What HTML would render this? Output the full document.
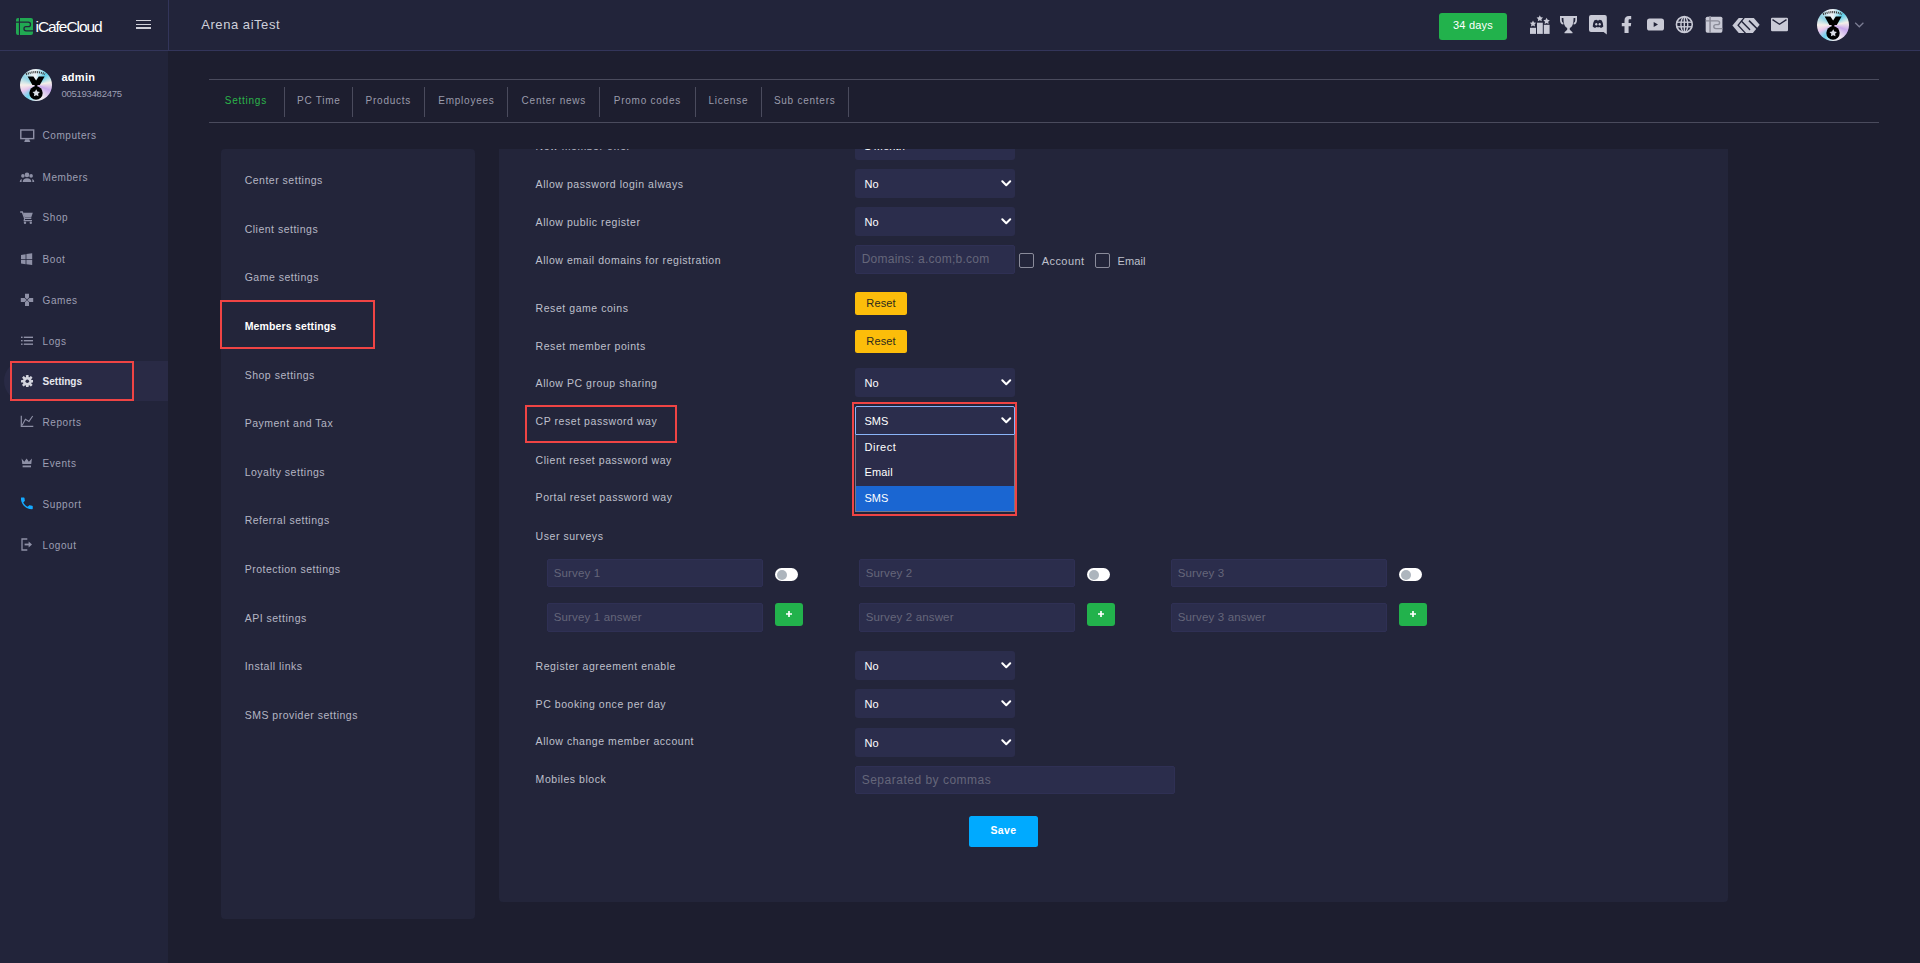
<!DOCTYPE html>
<html><head><meta charset="utf-8"><title>iCafeCloud</title>
<style>
html,body{margin:0;padding:0;}
body{width:1920px;height:963px;overflow:hidden;background:#1d1e2f;position:relative;font-family:"Liberation Sans",sans-serif;}
.t{position:absolute;line-height:1;white-space:nowrap;}
svg{display:block;}
</style></head><body>
<div style="position:absolute;left:0px;top:0px;width:1920px;height:50px;background:#22243a;"></div>
<div style="position:absolute;left:0px;top:50px;width:1920px;height:1px;background:#33355a;"></div>
<div style="position:absolute;left:168px;top:0px;width:1px;height:50px;background:#33355a;"></div>
<div style="position:absolute;left:0px;top:51px;width:168px;height:912px;background:#22243a;"></div>
<svg style="position:absolute;left:16px;top:18px;" width="17" height="17" viewBox="0 0 17 17"><rect x="0" y="0" width="17" height="17" rx="2" fill="#21a852"/>
<rect x="2.9" y="0" width="1.1" height="17" fill="#22243a"/>
<path d="M0 4.2 H12.3 Q14.5 4.2 14.5 6.4 Q14.5 8.6 12.3 8.6 H10 Q8 8.6 8 10.7 Q8 12.8 10 12.8 H17" stroke="#22243a" stroke-width="1.3" fill="none"/></svg>
<div class="t" style="left:35.5px;top:18.68px;font-size:15.5px;color:#ffffff;font-weight:400;letter-spacing:-1.05px;">iCafeCloud</div>
<div style="position:absolute;left:136px;top:19.8px;width:15px;height:1.6px;background:#cfcfd8;"></div>
<div style="position:absolute;left:136px;top:23.6px;width:15px;height:1.6px;background:#cfcfd8;"></div>
<div style="position:absolute;left:136px;top:27.4px;width:15px;height:1.6px;background:#cfcfd8;"></div>
<div class="t" style="left:201.25px;top:18.10px;font-size:13px;color:#cfd0da;font-weight:400;letter-spacing:0.55px;">Arena aiTest</div>
<div style="position:absolute;left:1439px;top:13px;width:68px;height:27px;background:#22b24c;border-radius:3px"></div>
<div class="t" style="left:1453px;top:19.98px;font-size:11px;color:#ffffff;font-weight:400;letter-spacing:0.2px;">34 days</div>
<svg style="position:absolute;left:1528px;top:14px;" width="24" height="21" viewBox="0 0 24 21"><rect x="2" y="13.8" width="6" height="6.1" fill="#c9cad6"/>
<rect x="9" y="8.7" width="5.8" height="11.2" fill="#c9cad6"/>
<rect x="15.8" y="10.8" width="5.8" height="9.1" fill="#c9cad6"/>
<polygon points="5.00,6.40 6.00,8.42 8.23,8.75 6.62,10.33 7.00,12.55 5.00,11.50 3.00,12.55 3.38,10.33 1.77,8.75 4.00,8.42" fill="#c9cad6"/><polygon points="11.80,1.20 12.80,3.22 15.03,3.55 13.42,5.13 13.80,7.35 11.80,6.30 9.80,7.35 10.18,5.13 8.57,3.55 10.80,3.22" fill="#c9cad6"/><polygon points="18.60,3.80 19.60,5.82 21.83,6.15 20.22,7.73 20.60,9.95 18.60,8.90 16.60,9.95 16.98,7.73 15.37,6.15 17.60,5.82" fill="#c9cad6"/></svg>
<svg style="position:absolute;left:1559px;top:15px;" width="20" height="19" viewBox="0 0 20 19"><path d="M1 1 H18 V5 Q18 9.2 14.6 9.6 L14.6 8 Q16.3 7.6 16.3 5 V3 H14.6 Q14.6 11.5 10.8 13 V14.8 L13.5 17.2 V18.2 H5.5 V17.2 L8.2 14.8 V13 Q4.4 11.5 4.4 3 H2.7 V5 Q2.7 7.6 4.4 8 L4.4 9.6 Q1 9.2 1 5 Z" fill="#c9cad6"/></svg>
<svg style="position:absolute;left:1589px;top:15px;" width="18" height="20" viewBox="0 0 18 20"><path d="M2 0 H15.8 Q17.8 0 17.8 2 V19.6 L14.6 16.9 H2 Q0 16.9 0 14.9 V2 Q0 0 2 0 Z" fill="#c9cad6"/>
<path d="M5.2 5.5 Q7 4.7 7.8 4.9 L8.1 5.4 Q9 5.3 9.9 5.4 L10.2 4.9 Q11 4.7 12.8 5.5 Q14.3 8.2 14.3 11.6 Q13 12.8 11.7 13 L11 12 Q10 12.3 9 12.3 Q8 12.3 7 12 L6.3 13 Q5 12.8 3.7 11.6 Q3.7 8.2 5.2 5.5 Z" fill="#22243a"/>
<ellipse cx="7.3" cy="9.3" rx="1.1" ry="1.2" fill="#c9cad6"/><ellipse cx="10.7" cy="9.3" rx="1.1" ry="1.2" fill="#c9cad6"/></svg>
<svg style="position:absolute;left:1621px;top:15px;" width="11" height="19" viewBox="0 0 11 19"><path d="M3.5 18 V11.2 H0.8 V8.1 H3.5 V5.5 Q3.5 1 8 1 H10.2 V4.3 H8.4 Q7.6 4.3 7.6 5.2 V8.1 H10.2 L9.8 11.2 H7.6 V18 Z" fill="#c9cad6"/></svg>
<svg style="position:absolute;left:1646px;top:18px;" width="19" height="13" viewBox="0 0 19 13"><rect x="1" y="0.5" width="17" height="12" rx="2.6" fill="#c9cad6"/>
<path d="M7.7 4 L12 6.5 L7.7 9 Z" fill="#22243a"/></svg>
<svg style="position:absolute;left:1675px;top:15px;" width="19" height="19" viewBox="0 0 19 19"><circle cx="9.35" cy="9.5" r="7.9" fill="none" stroke="#c9cad6" stroke-width="1.6"/>
<ellipse cx="9.35" cy="9.5" rx="3.4" ry="7.9" fill="none" stroke="#c9cad6" stroke-width="1.4"/>
<line x1="9.35" y1="1.6" x2="9.35" y2="17.4" stroke="#c9cad6" stroke-width="1.4"/>
<line x1="1.5" y1="7.2" x2="17.2" y2="7.2" stroke="#c9cad6" stroke-width="1.4"/>
<line x1="1.5" y1="11.8" x2="17.2" y2="11.8" stroke="#c9cad6" stroke-width="1.4"/></svg>
<svg style="position:absolute;left:1705px;top:16px;" width="18" height="18" viewBox="0 0 18 18"><rect x="0.7" y="0.7" width="16.7" height="16" rx="1.6" fill="#c9cad6"/>
<rect x="4.3" y="0" width="1.5" height="17" fill="#8a8b98"/>
<path d="M0.7 4.85 H12.4 Q14.6 4.85 14.6 6.7 Q14.6 8.6 12.4 8.6 H11 Q8.8 8.6 8.8 10.6 Q8.8 12.6 11 12.6 H17.5" stroke="#8a8b98" stroke-width="1.4" fill="none"/></svg>
<svg style="position:absolute;left:1732px;top:17px;" width="28" height="17" viewBox="0 0 28 17"><path d="M0.4 8.47 L6.73 1.05 H21.8 L27.67 7.8 L20.9 15.9 H6.73 Z" fill="#c9cad6"/>
<path d="M12.3 0.6 L6.07 8.25 L13.6 16.4" stroke="#22243a" stroke-width="1.3" fill="none"/>
<path d="M9.78 4.54 L17.63 12.6" stroke="#22243a" stroke-width="1.4" stroke-linecap="round"/>
<path d="M16.98 3.67 L25.6 12.3" stroke="#22243a" stroke-width="1.6"/></svg>
<svg style="position:absolute;left:1770px;top:17px;" width="19" height="15" viewBox="0 0 19 15"><rect x="1" y="0.7" width="17" height="13.6" rx="1.2" fill="#c9cad6"/>
<path d="M2.5 2.6 L9.5 7.3 L16.5 2.6" stroke="#22243a" stroke-width="1.3" fill="none"/></svg>
<div style="position:absolute;left:1817px;top:9px;width:32px;height:32px;border-radius:50%;background:conic-gradient(from 0deg, #eef2f6, #5fd0ea 45deg, #f4eee8 80deg, #c8a8ec 110deg, #f0e8f0 150deg, #e8eef4 180deg, #6cd4ee 215deg, #e6c6ee 245deg, #f6f0ea 270deg, #8ed2e4 305deg, #e8f0f4 340deg, #eef2f6 360deg)"></div>
<svg style="position:absolute;left:1817px;top:9px;" width="32" height="32" viewBox="0 0 32 32"><path d="M7.6 7.4 H13.4 L16.1 11.6 L18.8 7.4 H24.6 L19.8 16 H12.4 Z" fill="#000"/>
<circle cx="16" cy="24" r="6.7" fill="#000"/>
<rect x="14.6" y="15.5" width="2.8" height="3" fill="#000"/>
<polygon points="16.20,20.30 17.35,22.62 19.91,22.99 18.05,24.80 18.49,27.36 16.20,26.15 13.91,27.36 14.35,24.80 12.49,22.99 15.05,22.62" fill="#dcdee6"/>
<path d="M6 5.2 Q16 1 25 5.2" stroke="#333" stroke-width="2.2" stroke-dasharray="1 0.9" fill="none"/></svg>
<svg style="position:absolute;left:1854px;top:21px;" width="11" height="8" viewBox="0 0 11 8"><path d="M1.2 1.8 L5.3 5.8 L9.4 1.8" stroke="#7c7e94" stroke-width="1.2" fill="none"/></svg>
<div style="position:absolute;left:20px;top:69px;width:32px;height:32px;border-radius:50%;background:conic-gradient(from 0deg, #eef2f6, #5fd0ea 45deg, #f4eee8 80deg, #c8a8ec 110deg, #f0e8f0 150deg, #e8eef4 180deg, #6cd4ee 215deg, #e6c6ee 245deg, #f6f0ea 270deg, #8ed2e4 305deg, #e8f0f4 340deg, #eef2f6 360deg)"></div>
<svg style="position:absolute;left:20px;top:69px;" width="32" height="32" viewBox="0 0 32 32"><path d="M7.6 7.4 H13.4 L16.1 11.6 L18.8 7.4 H24.6 L19.8 16 H12.4 Z" fill="#000"/>
<circle cx="16" cy="24" r="6.7" fill="#000"/>
<rect x="14.6" y="15.5" width="2.8" height="3" fill="#000"/>
<polygon points="16.20,20.30 17.35,22.62 19.91,22.99 18.05,24.80 18.49,27.36 16.20,26.15 13.91,27.36 14.35,24.80 12.49,22.99 15.05,22.62" fill="#dcdee6"/>
<path d="M6 5.2 Q16 1 25 5.2" stroke="#333" stroke-width="2.2" stroke-dasharray="1 0.9" fill="none"/></svg>
<div class="t" style="left:61.4px;top:71.63px;font-size:11px;color:#ffffff;font-weight:700;letter-spacing:0.3px;">admin</div>
<div class="t" style="left:61.4px;top:89.26px;font-size:9.5px;color:#9d9fb3;font-weight:400;letter-spacing:-0.25px;">005193482475</div>
<div style="position:absolute;left:4px;top:361px;width:164px;height:40px;background:#292a45;border-radius:20px 0 0 20px"></div>
<div class="t" style="left:42.6px;top:131.31px;font-size:10px;color:#9d9fb3;font-weight:400;letter-spacing:0.55px;">Computers</div>
<div class="t" style="left:42.6px;top:172.72px;font-size:10px;color:#9d9fb3;font-weight:400;letter-spacing:0.55px;">Members</div>
<div class="t" style="left:42.6px;top:213.31px;font-size:10px;color:#9d9fb3;font-weight:400;letter-spacing:0.55px;">Shop</div>
<div class="t" style="left:42.6px;top:254.51px;font-size:10px;color:#9d9fb3;font-weight:400;letter-spacing:0.55px;">Boot</div>
<div class="t" style="left:42.6px;top:295.62px;font-size:10px;color:#9d9fb3;font-weight:400;letter-spacing:0.55px;">Games</div>
<div class="t" style="left:42.6px;top:336.62px;font-size:10px;color:#9d9fb3;font-weight:400;letter-spacing:0.55px;">Logs</div>
<div class="t" style="left:42.6px;top:376.72px;font-size:10px;color:#e6e7ee;font-weight:700;letter-spacing:0px;">Settings</div>
<div class="t" style="left:42.6px;top:417.62px;font-size:10px;color:#9d9fb3;font-weight:400;letter-spacing:0.55px;">Reports</div>
<div class="t" style="left:42.6px;top:458.62px;font-size:10px;color:#9d9fb3;font-weight:400;letter-spacing:0.55px;">Events</div>
<div class="t" style="left:42.6px;top:499.62px;font-size:10px;color:#9d9fb3;font-weight:400;letter-spacing:0.55px;">Support</div>
<div class="t" style="left:42.6px;top:540.62px;font-size:10px;color:#9d9fb3;font-weight:400;letter-spacing:0.55px;">Logout</div>
<svg style="position:absolute;left:20px;top:129px;" width="15" height="14" viewBox="0 0 15 14"><rect x="0.8" y="1" width="12.9" height="8.6" fill="none" stroke="#8e90a6" stroke-width="1.4"/><path d="M4.2 13 L5.3 10.2 H9.2 L10.3 13 Z" fill="#8e90a6"/></svg>
<svg style="position:absolute;left:19px;top:172px;" width="16" height="11" viewBox="0 0 16 11"><circle cx="8" cy="2.9" r="2.3" fill="#8e90a6"/><circle cx="3.9" cy="3.9" r="1.8" fill="#8e90a6"/><circle cx="12.1" cy="3.9" r="1.8" fill="#8e90a6"/>
<path d="M3.7 10 Q3.9 6.3 8 6.3 Q12.1 6.3 12.3 10 Z" fill="#8e90a6"/>
<path d="M0.7 10 Q0.8 7.2 2.8 6.9 Q2.6 8.2 2.6 10 Z" fill="#8e90a6"/><path d="M15.3 10 Q15.2 7.2 13.2 6.9 Q13.4 8.2 13.4 10 Z" fill="#8e90a6"/></svg>
<svg style="position:absolute;left:20px;top:211px;" width="14" height="14" viewBox="0 0 14 14"><path d="M0.2 1 H2.3 L4.6 7.4 H11.3" fill="none" stroke="#8e90a6" stroke-width="1.3"/>
<path d="M3 1.8 H12.8 L11.2 6.6 H4.6 Z" fill="#8e90a6"/>
<path d="M4.6 7.4 L4.2 9.6 H12" fill="none" stroke="#8e90a6" stroke-width="1.2"/>
<circle cx="5" cy="11.8" r="1.2" fill="#8e90a6"/><circle cx="10.8" cy="11.8" r="1.2" fill="#8e90a6"/></svg>
<svg style="position:absolute;left:21px;top:253px;" width="12" height="13" viewBox="0 0 12 13"><path d="M0 2 L4.6 1.3 V5.9 H0 Z M0 6.7 H4.6 V11.2 L0 10.4 Z M5.4 1.1 L11.2 0.2 V5.9 H5.4 Z M5.4 6.7 H11.2 V12 L5.4 11.3 Z" fill="#8e90a6"/></svg>
<svg style="position:absolute;left:20px;top:293px;" width="14" height="14" viewBox="0 0 14 14"><path d="M5 0.8 H9 V4.6 L7 6.6 L5 4.6 Z M5 13 H9 V9.2 L7 7.2 L5 9.2 Z M0.8 5 V9 H4.6 L6.6 7 L4.6 5 Z M13.2 5 V9 H9.4 L7.4 7 L9.4 5 Z" fill="#8e90a6"/></svg>
<svg style="position:absolute;left:21px;top:336px;" width="13" height="10" viewBox="0 0 13 10"><rect x="0" y="0.6" width="1.6" height="1.4" fill="#8e90a6"/><rect x="2.8" y="0.6" width="9.2" height="1.4" fill="#8e90a6"/>
<rect x="0" y="4" width="1.6" height="1.4" fill="#8e90a6"/><rect x="2.8" y="4" width="9.2" height="1.4" fill="#8e90a6"/>
<rect x="0" y="7.5" width="1.6" height="1.4" fill="#8e90a6"/><rect x="2.8" y="7.5" width="9.2" height="1.4" fill="#8e90a6"/></svg>
<svg style="position:absolute;left:20.6px;top:374.8px;" width="12.6" height="12.6" viewBox="0 0 12.6 12.6"><rect x="5.0" y="0" width="2.6" height="12.6" rx="0.5" fill="#d3d4de" transform="rotate(0 6.3 6.3)"/><rect x="5.0" y="0" width="2.6" height="12.6" rx="0.5" fill="#d3d4de" transform="rotate(45 6.3 6.3)"/><rect x="5.0" y="0" width="2.6" height="12.6" rx="0.5" fill="#d3d4de" transform="rotate(90 6.3 6.3)"/><rect x="5.0" y="0" width="2.6" height="12.6" rx="0.5" fill="#d3d4de" transform="rotate(135 6.3 6.3)"/><circle cx="6.3" cy="6.3" r="4.4" fill="#d3d4de"/><circle cx="6.3" cy="6.3" r="1.8" fill="#292a45"/></svg>
<svg style="position:absolute;left:20px;top:415px;" width="14" height="13" viewBox="0 0 14 13"><path d="M1.3 0.8 V11.4 H13.3" fill="none" stroke="#8e90a6" stroke-width="1.2"/>
<path d="M2 10.6 L5.4 4.3 L9 6.4 L12.7 1" fill="none" stroke="#8e90a6" stroke-width="1.1"/></svg>
<svg style="position:absolute;left:21px;top:458px;" width="12" height="11" viewBox="0 0 12 11"><path d="M0.6 0.6 L3.3 3.8 L5.6 0.4 L7.9 3.8 L10.9 0.6 L10.3 6 H1.3 Z" fill="#8e90a6"/><rect x="1.6" y="7.5" width="8.4" height="1.8" fill="#8e90a6"/></svg>
<svg style="position:absolute;left:21px;top:497px;" width="12" height="13" viewBox="0 0 12 13"><path transform="translate(-2.1 -1.6) scale(0.66)" d="M6.62 10.79c1.44 2.83 3.76 5.14 6.59 6.59l2.2-2.2c.27-.27.67-.36 1.02-.24 1.12.37 2.33.57 3.57.57.55 0 1 .45 1 1V20c0 .55-.45 1-1 1-9.39 0-17-7.61-17-17 0-.55.45-1 1-1h3.5c.55 0 1 .45 1 1 0 1.25.2 2.45.57 3.57.11.35.03.74-.25 1.02l-2.2 2.2z" fill="#14a9ff"/></svg>
<svg style="position:absolute;left:21px;top:538px;" width="12" height="13" viewBox="0 0 12 13"><path d="M6.3 1 H1 V12 H6.3" fill="none" stroke="#8e90a6" stroke-width="1.3"/>
<path d="M3.6 6.5 H8.3" stroke="#8e90a6" stroke-width="1.8"/><path d="M7.6 3.6 L11 6.5 L7.6 9.4 Z" fill="#8e90a6"/></svg>
<div style="position:absolute;left:10px;top:361px;width:124px;height:40px;background:transparent;border:2px solid #ef4444;box-sizing:border-box"></div>
<div style="position:absolute;left:209px;top:79px;width:1670px;height:1px;background:#4a4b5d;"></div>
<div style="position:absolute;left:209px;top:122px;width:1670px;height:1px;background:#4a4b5d;"></div>
<div style="position:absolute;left:284px;top:87px;width:1px;height:30px;background:#4a4b5d;"></div>
<div style="position:absolute;left:352px;top:87px;width:1px;height:30px;background:#4a4b5d;"></div>
<div style="position:absolute;left:424px;top:87px;width:1px;height:30px;background:#4a4b5d;"></div>
<div style="position:absolute;left:507px;top:87px;width:1px;height:30px;background:#4a4b5d;"></div>
<div style="position:absolute;left:599px;top:87px;width:1px;height:30px;background:#4a4b5d;"></div>
<div style="position:absolute;left:695px;top:87px;width:1px;height:30px;background:#4a4b5d;"></div>
<div style="position:absolute;left:761px;top:87px;width:1px;height:30px;background:#4a4b5d;"></div>
<div style="position:absolute;left:848px;top:87px;width:1px;height:30px;background:#4a4b5d;"></div>
<div class="t" style="left:224.75px;top:95.56px;font-size:10px;color:#2bb54a;font-weight:400;letter-spacing:0.75px;">Settings</div>
<div class="t" style="left:297px;top:95.56px;font-size:10px;color:#9a9bab;font-weight:400;letter-spacing:0.75px;">PC Time</div>
<div class="t" style="left:365.6px;top:95.56px;font-size:10px;color:#9a9bab;font-weight:400;letter-spacing:0.75px;">Products</div>
<div class="t" style="left:438.3px;top:95.56px;font-size:10px;color:#9a9bab;font-weight:400;letter-spacing:0.75px;">Employees</div>
<div class="t" style="left:521.6px;top:95.56px;font-size:10px;color:#9a9bab;font-weight:400;letter-spacing:0.75px;">Center news</div>
<div class="t" style="left:613.8px;top:95.56px;font-size:10px;color:#9a9bab;font-weight:400;letter-spacing:0.75px;">Promo codes</div>
<div class="t" style="left:708.5px;top:95.56px;font-size:10px;color:#9a9bab;font-weight:400;letter-spacing:0.75px;">License</div>
<div class="t" style="left:773.9px;top:95.56px;font-size:10px;color:#9a9bab;font-weight:400;letter-spacing:0.75px;">Sub centers</div>
<div style="position:absolute;left:221px;top:149px;width:254px;height:770px;background:#23253a;border-radius:4px"></div>
<div class="t" style="left:244.7px;top:175.27px;font-size:10.5px;color:#b5b6c4;font-weight:400;letter-spacing:0.5px;">Center settings</div>
<div class="t" style="left:244.7px;top:223.87px;font-size:10.5px;color:#b5b6c4;font-weight:400;letter-spacing:0.5px;">Client settings</div>
<div class="t" style="left:244.7px;top:272.47px;font-size:10.5px;color:#b5b6c4;font-weight:400;letter-spacing:0.5px;">Game settings</div>
<div class="t" style="left:244.7px;top:321.32px;font-size:10.5px;color:#ffffff;font-weight:700;letter-spacing:0.15px;">Members settings</div>
<div class="t" style="left:244.7px;top:369.67px;font-size:10.5px;color:#b5b6c4;font-weight:400;letter-spacing:0.5px;">Shop settings</div>
<div class="t" style="left:244.7px;top:418.27px;font-size:10.5px;color:#b5b6c4;font-weight:400;letter-spacing:0.5px;">Payment and Tax</div>
<div class="t" style="left:244.7px;top:466.87px;font-size:10.5px;color:#b5b6c4;font-weight:400;letter-spacing:0.5px;">Loyalty settings</div>
<div class="t" style="left:244.7px;top:515.47px;font-size:10.5px;color:#b5b6c4;font-weight:400;letter-spacing:0.5px;">Referral settings</div>
<div class="t" style="left:244.7px;top:564.07px;font-size:10.5px;color:#b5b6c4;font-weight:400;letter-spacing:0.5px;">Protection settings</div>
<div class="t" style="left:244.7px;top:612.67px;font-size:10.5px;color:#b5b6c4;font-weight:400;letter-spacing:0.5px;">API settings</div>
<div class="t" style="left:244.7px;top:661.27px;font-size:10.5px;color:#b5b6c4;font-weight:400;letter-spacing:0.5px;">Install links</div>
<div class="t" style="left:244.7px;top:709.87px;font-size:10.5px;color:#b5b6c4;font-weight:400;letter-spacing:0.5px;">SMS provider settings</div>
<div style="position:absolute;left:220px;top:300px;width:155px;height:49px;background:transparent;border:2px solid #ef4444;box-sizing:border-box"></div>
<div style="position:absolute;left:499px;top:149px;width:1229px;height:753px;background:#23253a;border-radius:0 0 4px 4px"></div>
<div style="position:absolute;left:499px;top:149px;width:1229px;height:754px;overflow:hidden">
<div style="position:absolute;left:-499px;top:-149px;width:1920px;height:963px">
<div class="t" style="left:535.6px;top:141.17px;font-size:10.5px;color:#bfc0cc;font-weight:400;letter-spacing:0.55px;">New member offer</div>
<div style="position:absolute;left:855px;top:131px;width:160px;height:29px;background:#2b2d4c;border-radius:3px"></div>
<div class="t" style="left:864.5px;top:140.63px;font-size:11px;color:#ffffff;font-weight:400;letter-spacing:0.1px;">1 Month</div>
</div></div>
<div class="t" style="left:535.6px;top:179.17px;font-size:10.5px;color:#bfc0cc;font-weight:400;letter-spacing:0.55px;">Allow password login always</div>
<div style="position:absolute;left:855px;top:169px;width:160px;height:29px;background:#2b2d4c;border-radius:3px;"></div>
<div class="t" style="left:864.5px;top:178.68px;font-size:11px;color:#ffffff;font-weight:400;letter-spacing:0.1px;">No</div>
<svg style="position:absolute;left:1000.5px;top:179.6px;" width="11" height="8" viewBox="0 0 11 8"><path d="M1.3 1.3 L5.25 5.3 L9.2 1.3" fill="none" stroke="#ffffff" stroke-width="2" stroke-linecap="round" stroke-linejoin="round"/></svg>
<div class="t" style="left:535.6px;top:217.27px;font-size:10.5px;color:#bfc0cc;font-weight:400;letter-spacing:0.55px;">Allow public register</div>
<div style="position:absolute;left:855px;top:207px;width:160px;height:29px;background:#2b2d4c;border-radius:3px;"></div>
<div class="t" style="left:864.5px;top:216.68px;font-size:11px;color:#ffffff;font-weight:400;letter-spacing:0.1px;">No</div>
<svg style="position:absolute;left:1000.5px;top:217.6px;" width="11" height="8" viewBox="0 0 11 8"><path d="M1.3 1.3 L5.25 5.3 L9.2 1.3" fill="none" stroke="#ffffff" stroke-width="2" stroke-linecap="round" stroke-linejoin="round"/></svg>
<div class="t" style="left:535.6px;top:255.37px;font-size:10.5px;color:#bfc0cc;font-weight:400;letter-spacing:0.55px;">Allow email domains for registration</div>
<div style="position:absolute;left:855px;top:245px;width:160px;height:29px;background:#2b2d4c;border-radius:2px;border:1px solid #2f3054;box-sizing:border-box"></div>
<div class="t" style="left:861.7px;top:253.29px;font-size:12px;color:#65667a;font-weight:400;letter-spacing:0.25px;">Domains: a.com;b.com</div>
<div style="position:absolute;left:1019px;top:253px;width:15px;height:15px;background:transparent;border:1px solid #8a8b9a;border-radius:2px;box-sizing:border-box"></div>
<div class="t" style="left:1041.7px;top:256.03px;font-size:11px;color:#bfc0cc;font-weight:400;letter-spacing:0.45px;">Account</div>
<div style="position:absolute;left:1095px;top:253px;width:15px;height:15px;background:transparent;border:1px solid #8a8b9a;border-radius:2px;box-sizing:border-box"></div>
<div class="t" style="left:1117.5px;top:256.03px;font-size:11px;color:#bfc0cc;font-weight:400;letter-spacing:0.1px;">Email</div>
<div class="t" style="left:535.6px;top:302.57px;font-size:10.5px;color:#bfc0cc;font-weight:400;letter-spacing:0.55px;">Reset game coins</div>
<div style="position:absolute;left:855px;top:292px;width:52px;height:23px;background:#fcbd0a;border-radius:2.5px"></div>
<div class="t" style="left:866.3px;top:297.73px;font-size:11px;color:#2b2a1e;font-weight:400;letter-spacing:0.15px;">Reset</div>
<div class="t" style="left:535.6px;top:340.57px;font-size:10.5px;color:#bfc0cc;font-weight:400;letter-spacing:0.55px;">Reset member points</div>
<div style="position:absolute;left:855px;top:330px;width:52px;height:23px;background:#fcbd0a;border-radius:2.5px"></div>
<div class="t" style="left:866.3px;top:335.73px;font-size:11px;color:#2b2a1e;font-weight:400;letter-spacing:0.15px;">Reset</div>
<div class="t" style="left:535.6px;top:378.37px;font-size:10.5px;color:#bfc0cc;font-weight:400;letter-spacing:0.55px;">Allow PC group sharing</div>
<div style="position:absolute;left:855px;top:368px;width:160px;height:29px;background:#2b2d4c;border-radius:3px;"></div>
<div class="t" style="left:864.5px;top:377.68px;font-size:11px;color:#ffffff;font-weight:400;letter-spacing:0.1px;">No</div>
<svg style="position:absolute;left:1000.5px;top:378.6px;" width="11" height="8" viewBox="0 0 11 8"><path d="M1.3 1.3 L5.25 5.3 L9.2 1.3" fill="none" stroke="#ffffff" stroke-width="2" stroke-linecap="round" stroke-linejoin="round"/></svg>
<div class="t" style="left:535.6px;top:416.17px;font-size:10.5px;color:#bfc0cc;font-weight:400;letter-spacing:0.55px;">CP reset password way</div>
<div class="t" style="left:535.6px;top:454.57px;font-size:10.5px;color:#bfc0cc;font-weight:400;letter-spacing:0.55px;">Client reset password way</div>
<div class="t" style="left:535.6px;top:492.17px;font-size:10.5px;color:#bfc0cc;font-weight:400;letter-spacing:0.55px;">Portal reset password way</div>
<div class="t" style="left:535.6px;top:530.57px;font-size:10.5px;color:#bfc0cc;font-weight:400;letter-spacing:0.55px;">User surveys</div>
<div style="position:absolute;left:547px;top:559px;width:216px;height:28px;background:#2b2d4c;border-radius:2px;border:1px solid #2f3054;box-sizing:border-box"></div>
<div class="t" style="left:553.75px;top:568.13px;font-size:11.5px;color:#65667a;font-weight:400;letter-spacing:0.15px;">Survey 1</div>
<div style="position:absolute;left:547px;top:603px;width:216px;height:29px;background:#2b2d4c;border-radius:2px;border:1px solid #2f3054;box-sizing:border-box"></div>
<div class="t" style="left:553.75px;top:612.33px;font-size:11.5px;color:#65667a;font-weight:400;letter-spacing:0.15px;">Survey 1 answer</div>
<div style="position:absolute;left:775px;top:568px;width:23px;height:13px;background:#ffffff;border-radius:7px"></div>
<div style="position:absolute;left:777px;top:569.5px;width:10px;height:10px;background:#adb5bd;border-radius:50%"></div>
<div style="position:absolute;left:775px;top:603px;width:28px;height:23px;background:#22b24c;border-radius:3px"></div>
<svg style="position:absolute;left:785px;top:610px;" width="8" height="8" viewBox="0 0 8 8"><path d="M4 1 V7 M1 4 H7" stroke="#ffffff" stroke-width="1.7"/></svg>
<div style="position:absolute;left:859px;top:559px;width:216px;height:28px;background:#2b2d4c;border-radius:2px;border:1px solid #2f3054;box-sizing:border-box"></div>
<div class="t" style="left:865.75px;top:568.13px;font-size:11.5px;color:#65667a;font-weight:400;letter-spacing:0.15px;">Survey 2</div>
<div style="position:absolute;left:859px;top:603px;width:216px;height:29px;background:#2b2d4c;border-radius:2px;border:1px solid #2f3054;box-sizing:border-box"></div>
<div class="t" style="left:865.75px;top:612.33px;font-size:11.5px;color:#65667a;font-weight:400;letter-spacing:0.15px;">Survey 2 answer</div>
<div style="position:absolute;left:1087px;top:568px;width:23px;height:13px;background:#ffffff;border-radius:7px"></div>
<div style="position:absolute;left:1089px;top:569.5px;width:10px;height:10px;background:#adb5bd;border-radius:50%"></div>
<div style="position:absolute;left:1087px;top:603px;width:28px;height:23px;background:#22b24c;border-radius:3px"></div>
<svg style="position:absolute;left:1097px;top:610px;" width="8" height="8" viewBox="0 0 8 8"><path d="M4 1 V7 M1 4 H7" stroke="#ffffff" stroke-width="1.7"/></svg>
<div style="position:absolute;left:1171px;top:559px;width:216px;height:28px;background:#2b2d4c;border-radius:2px;border:1px solid #2f3054;box-sizing:border-box"></div>
<div class="t" style="left:1177.75px;top:568.13px;font-size:11.5px;color:#65667a;font-weight:400;letter-spacing:0.15px;">Survey 3</div>
<div style="position:absolute;left:1171px;top:603px;width:216px;height:29px;background:#2b2d4c;border-radius:2px;border:1px solid #2f3054;box-sizing:border-box"></div>
<div class="t" style="left:1177.75px;top:612.33px;font-size:11.5px;color:#65667a;font-weight:400;letter-spacing:0.15px;">Survey 3 answer</div>
<div style="position:absolute;left:1399px;top:568px;width:23px;height:13px;background:#ffffff;border-radius:7px"></div>
<div style="position:absolute;left:1401px;top:569.5px;width:10px;height:10px;background:#adb5bd;border-radius:50%"></div>
<div style="position:absolute;left:1399px;top:603px;width:28px;height:23px;background:#22b24c;border-radius:3px"></div>
<svg style="position:absolute;left:1409px;top:610px;" width="8" height="8" viewBox="0 0 8 8"><path d="M4 1 V7 M1 4 H7" stroke="#ffffff" stroke-width="1.7"/></svg>
<div class="t" style="left:535.6px;top:661.27px;font-size:10.5px;color:#bfc0cc;font-weight:400;letter-spacing:0.55px;">Register agreement enable</div>
<div style="position:absolute;left:855px;top:651px;width:160px;height:29px;background:#2b2d4c;border-radius:3px;"></div>
<div class="t" style="left:864.5px;top:660.68px;font-size:11px;color:#ffffff;font-weight:400;letter-spacing:0.1px;">No</div>
<svg style="position:absolute;left:1000.5px;top:661.6px;" width="11" height="8" viewBox="0 0 11 8"><path d="M1.3 1.3 L5.25 5.3 L9.2 1.3" fill="none" stroke="#ffffff" stroke-width="2" stroke-linecap="round" stroke-linejoin="round"/></svg>
<div class="t" style="left:535.6px;top:698.67px;font-size:10.5px;color:#bfc0cc;font-weight:400;letter-spacing:0.55px;">PC booking once per day</div>
<div style="position:absolute;left:855px;top:689px;width:160px;height:29px;background:#2b2d4c;border-radius:3px;"></div>
<div class="t" style="left:864.5px;top:698.68px;font-size:11px;color:#ffffff;font-weight:400;letter-spacing:0.1px;">No</div>
<svg style="position:absolute;left:1000.5px;top:699.6px;" width="11" height="8" viewBox="0 0 11 8"><path d="M1.3 1.3 L5.25 5.3 L9.2 1.3" fill="none" stroke="#ffffff" stroke-width="2" stroke-linecap="round" stroke-linejoin="round"/></svg>
<div class="t" style="left:535.6px;top:736.37px;font-size:10.5px;color:#bfc0cc;font-weight:400;letter-spacing:0.55px;">Allow change member account</div>
<div style="position:absolute;left:855px;top:728px;width:160px;height:29px;background:#2b2d4c;border-radius:3px;"></div>
<div class="t" style="left:864.5px;top:737.68px;font-size:11px;color:#ffffff;font-weight:400;letter-spacing:0.1px;">No</div>
<svg style="position:absolute;left:1000.5px;top:738.6px;" width="11" height="8" viewBox="0 0 11 8"><path d="M1.3 1.3 L5.25 5.3 L9.2 1.3" fill="none" stroke="#ffffff" stroke-width="2" stroke-linecap="round" stroke-linejoin="round"/></svg>
<div class="t" style="left:535.6px;top:774.27px;font-size:10.5px;color:#bfc0cc;font-weight:400;letter-spacing:0.55px;">Mobiles block</div>
<div style="position:absolute;left:855px;top:766px;width:320px;height:28px;background:#2b2d4c;border-radius:2px;border:1px solid #2f3054;box-sizing:border-box"></div>
<div class="t" style="left:861.7px;top:773.79px;font-size:12px;color:#65667a;font-weight:400;letter-spacing:0.5px;">Separated by commas</div>
<div style="position:absolute;left:969px;top:816px;width:69px;height:31px;background:#00aaff;border-radius:2.5px"></div>
<div class="t" style="left:990.5px;top:825.02px;font-size:10.5px;color:#ffffff;font-weight:700;letter-spacing:0.35px;">Save</div>
<div style="position:absolute;left:855px;top:406px;width:160px;height:29px;background:#2b2d4c;border:1px solid #8ab4f8;box-sizing:border-box;border-radius:2px 2px 0 0"></div>
<div class="t" style="left:864.4px;top:416.13px;font-size:11px;color:#ffffff;font-weight:400;letter-spacing:0px;">SMS</div>
<svg style="position:absolute;left:1000.5px;top:416.6px;" width="11" height="8" viewBox="0 0 11 8"><path d="M1.3 1.3 L5.25 5.3 L9.2 1.3" fill="none" stroke="#ffffff" stroke-width="2" stroke-linecap="round" stroke-linejoin="round"/></svg>
<div style="position:absolute;left:855px;top:435px;width:160px;height:77px;background:#2b2c4a;border:1px solid #77788a;border-top:none;box-sizing:border-box"></div>
<div style="position:absolute;left:856px;top:486px;width:158px;height:25px;background:#1a66d2;"></div>
<div class="t" style="left:864.4px;top:442.43px;font-size:11px;color:#ffffff;font-weight:400;letter-spacing:0.55px;">Direct</div>
<div class="t" style="left:864.4px;top:467.23px;font-size:11px;color:#ffffff;font-weight:400;letter-spacing:0.2px;">Email</div>
<div class="t" style="left:864.4px;top:493.03px;font-size:11px;color:#ffffff;font-weight:400;letter-spacing:0px;">SMS</div>
<div style="position:absolute;left:525px;top:405px;width:152px;height:38px;background:transparent;border:2px solid #ef4444;box-sizing:border-box"></div>
<div style="position:absolute;left:852px;top:402px;width:165px;height:114px;background:transparent;border:2px solid #ef4444;box-sizing:border-box"></div>
</body></html>
